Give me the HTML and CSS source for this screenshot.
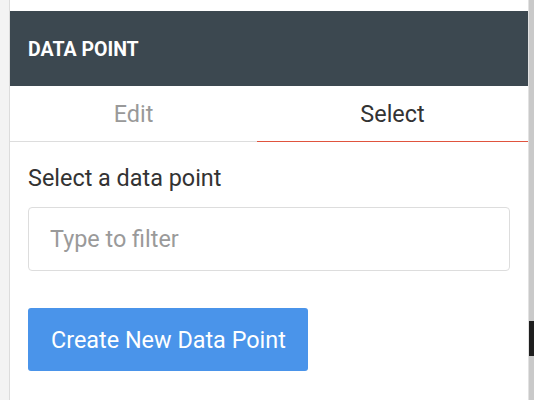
FILE: index.html
```html
<!DOCTYPE html>
<html lang="en">
<head>
<meta charset="utf-8">
<title>Data Point</title>
<link rel="stylesheet" href="styles.css">
</head>
<body>
<div class="frame">
  <div class="gutter"></div>
  <div class="panel">
    <div class="panel-top"></div>
    <header class="panel-header"><h2 class="panel-title">DATA POINT</h2></header>
    <nav class="tabs">
      <button class="tab tab-edit" type="button">Edit</button>
      <button class="tab tab-select active" type="button">Select</button>
    </nav>
    <section class="panel-body">
      <label class="field-label" for="filter">Select a data point</label>
      <input class="filter-input" id="filter" type="text" placeholder="Type to filter">
      <button class="btn-primary" type="button">Create New Data Point</button>
    </section>
  </div>
  <div class="scrollbar"><div class="scroll-thumb"></div></div>
</div>
</body>
</html>
```
FILE: styles.css
```css
* { box-sizing: border-box; }
html, body { margin: 0; padding: 0; }
body {
  font-family: Roboto, "Liberation Sans", sans-serif;
  background: #f3f3f3;
  color: #333;
}
.frame {
  display: flex;
  height: 400px;
  overflow: hidden;
}
.gutter {
  width: 10px;
  background: #f3f3f3;
  border-right: 1px solid #dcdcdc;
}
.panel {
  flex: 1;
  background: #fff;
  display: flex;
  flex-direction: column;
}
.panel-top { height: 11px; }
.panel-header {
  height: 75px;
  background: #3c4850;
  display: flex;
  align-items: center;
  padding: 2px 0 0 18px;
}
.panel-title {
  margin: 0;
  color: #fff;
  font-size: 19.5px;
  font-weight: 700;
  letter-spacing: 0;
}
.tabs {
  display: flex;
  height: 56px;
}
.tab {
  font-family: inherit;
  font-size: 23.4px;
  background: #fff;
  border: 0;
  border-bottom: 1px solid #ddd;
  padding: 0;
  color: #999;
  cursor: pointer;
}
.tab-edit { width: 247px; }
.tab-select { flex: 1; }
.tab.active {
  color: #333;
  border-bottom-color: #e0533e;
}
.panel-body {
  padding: 22px 18px 0 18px;
  display: flex;
  flex-direction: column;
  align-items: flex-start;
}
.field-label {
  font-size: 23.4px;
  line-height: 28px;
  color: #333;
}
.filter-input {
  margin-top: 15px;
  width: 100%;
  height: 64px;
  border: 1px solid #ddd;
  border-radius: 4px;
  padding: 0 21px;
  font-family: inherit;
  font-size: 23.4px;
  color: #333;
  outline: none;
}
.filter-input::placeholder { color: #9a9a9a; }
.btn-primary {
  margin-top: 37px;
  width: 280px;
  height: 63px;
  border: 0;
  border-radius: 3px;
  background: #4a94ea;
  color: #fff;
  font-family: inherit;
  font-size: 23.4px;
  padding: 0 0 0 23px;
  text-align: left;
  white-space: nowrap;
  cursor: pointer;
}
.scrollbar {
  width: 6px;
  background: #c9c9c9;
  border-left: 1px solid #e2e2e2;
  padding-top: 321px;
}
.scroll-thumb {
  height: 35px;
  background: #1e1e1e;
}
```
